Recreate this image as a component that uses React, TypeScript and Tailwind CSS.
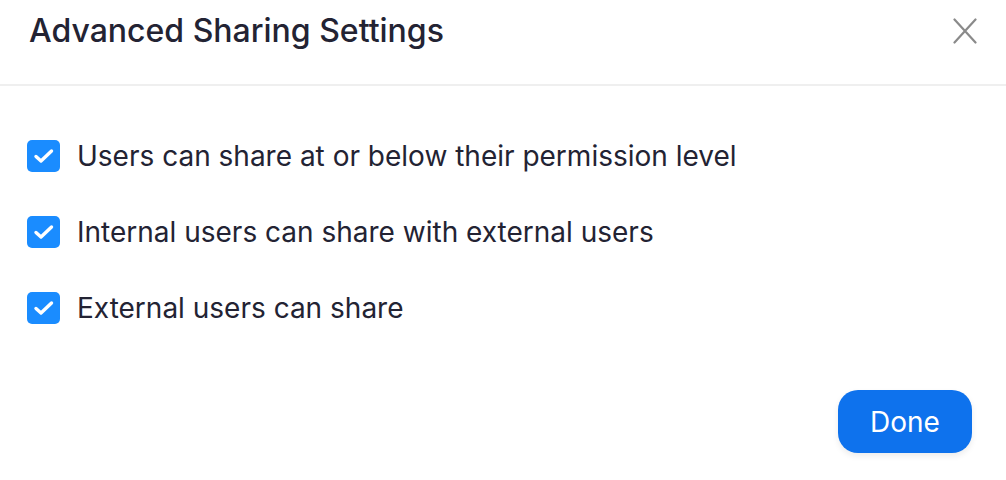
export default function App() {
  const items = [
    "Users can share at or below their permission level",
    "Internal users can share with external users",
    "External users can share",
  ];

  return (
    <div className="w-[1006px] h-[480px] bg-white text-[#232333] flex flex-col" style={{ fontFamily: "Inter, 'Noto Sans', sans-serif" }}>
      <div className="h-[86px] flex items-center justify-between pl-[29px] pr-[29px] border-b-2 border-[#efefef] shrink-0">
        <h1 className="text-[32px] font-medium leading-none -mt-[22px]">Advanced Sharing Settings</h1>
        <button className="-mt-[22px] text-[#8a8a8a]">
          <svg width="24" height="26" viewBox="0 0 24 26" fill="none" stroke="currentColor" strokeWidth="2.2" strokeLinecap="round">
            <path d="M1.5 1.5 22.5 24.5M22.5 1.5 1.5 24.5" />
          </svg>
        </button>
      </div>

      <div className="flex flex-col gap-[44px] pl-[27px] pt-[54px]">
        {items.map((t) => (
          <label key={t} className="flex items-center gap-[17px] h-[32px]">
            <span className="w-[33px] h-[32px] rounded-[5px] bg-[#1a8cff] flex items-center justify-center shrink-0">
              <svg width="22" height="22" viewBox="0 0 22 22" fill="none" stroke="white" strokeWidth="3.4" strokeLinecap="round" strokeLinejoin="round">
                <path d="M3 11.5 8 16 18.5 6" />
              </svg>
            </span>
            <span className="text-[28px] leading-none">{t}</span>
          </label>
        ))}
      </div>

      <div className="flex justify-end pr-[34px] mt-auto mb-[27px]">
        <button className="w-[134px] h-[63px] rounded-[20px] bg-[#0e72ed] text-white text-[28px] shadow-[0_3px_6px_rgba(0,0,0,0.08)]">
          Done
        </button>
      </div>
    </div>
  );
}
